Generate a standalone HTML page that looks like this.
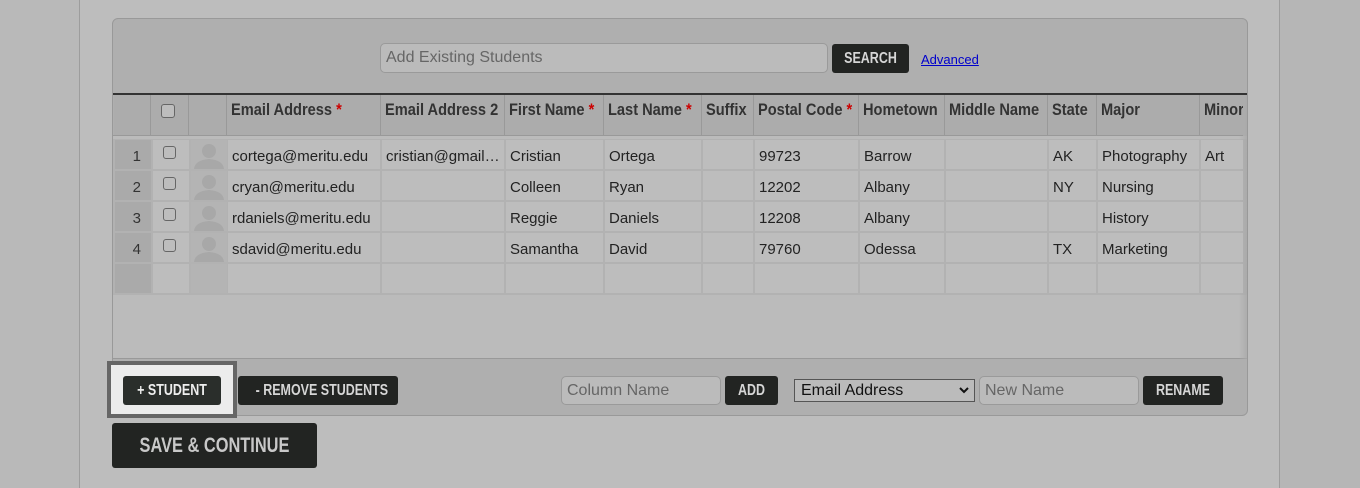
<!DOCTYPE html>
<html><head><meta charset="utf-8"><style>
*{box-sizing:border-box;margin:0;padding:0}
body{width:1360px;height:488px;background:#bdbdbd;position:relative;overflow:hidden;font-family:"Liberation Sans",sans-serif}
.abs{position:absolute}
.n{display:inline-block;transform:scaleX(.86);transform-origin:left center;font-weight:bold;white-space:nowrap}
.btn{position:absolute;background:#222422;color:#d6d6d6;border-radius:3px;font-size:16px;overflow:hidden;white-space:nowrap}
.btn .n{transform-origin:center;position:absolute;left:0;right:0;text-align:center;transform:scaleX(.78)}
.inp{position:absolute;background:#bbb;border:1px solid #9a9a9a;border-radius:5px;color:#666;font-size:16px;padding-left:5px}
.hc{position:absolute;top:95px;height:40px;border-right:1px solid #999;font-size:17px;color:#333;padding:5px 0 0 4px;white-space:nowrap;overflow:hidden;background:#acacac}
.hc b{color:#c00}
.c{position:absolute;height:29px;background:#bdbdbd;font-size:15px;color:#222;padding:8px 0 0 4px;white-space:nowrap;overflow:hidden}
.rn{background:#aaa;text-align:right;padding-right:10px;color:#333}
.cb{width:13px;height:13px;border:1px solid #666;border-radius:3px;background:#bdbdbd;position:absolute}
</style></head><body>
<div class="abs" style="left:0;top:0;width:80px;height:488px;background:#b9b9b9;border-right:1px solid #9d9d9d"></div>
<div class="abs" style="left:1279px;top:0;width:81px;height:488px;background:#b6b6b6;border-left:1px solid #9d9d9d"></div>
<div class="abs" style="left:112px;top:18px;width:1136px;height:398px;background:#afafaf;border:1px solid #999;border-radius:6px;overflow:hidden">
 <div class="abs" style="left:0;top:74px;width:1136px;height:2px;background:#333"></div>
 <div class="abs" style="left:0;top:117px;width:1136px;height:223px;background:#bbb"></div>
 <div class="abs" style="left:0;top:120px;width:1136px;height:156px;background:#b2b2b2"></div>
 <div class="abs" style="left:0;top:339px;width:1136px;height:1px;background:#999"></div>
 <div class="abs" style="left:1126px;top:76px;width:10px;height:264px;background:linear-gradient(90deg,rgba(187,187,187,0),#a9a9a9)"></div>
</div>
<div class="inp" style="left:380px;top:43px;width:448px;height:30px;line-height:28px">Add Existing Students</div>
<div class="btn" style="left:832px;top:44px;width:77px;height:29px;line-height:29px"><span class="n">SEARCH</span></div>
<div class="abs" style="left:921px;top:52px;font-size:13px;color:#0000cc;text-decoration:underline">Advanced</div>

<div class="hc" style="left:114px;width:37px"></div>
<div class="hc" style="left:151px;width:38px"><div class="cb" style="left:10px;top:9px;width:14px;height:14px"></div></div>
<div class="hc" style="left:189px;width:38px"></div>
<div class="hc" style="left:227px;width:154px"><span class="n">Email Address <b>*</b></span></div>
<div class="hc" style="left:381px;width:124px"><span class="n">Email Address 2</span></div>
<div class="hc" style="left:505px;width:99px"><span class="n">First Name <b>*</b></span></div>
<div class="hc" style="left:604px;width:98px"><span class="n">Last Name <b>*</b></span></div>
<div class="hc" style="left:702px;width:52px"><span class="n">Suffix</span></div>
<div class="hc" style="left:754px;width:105px"><span class="n">Postal Code <b>*</b></span></div>
<div class="hc" style="left:859px;width:86px"><span class="n">Hometown</span></div>
<div class="hc" style="left:945px;width:103px"><span class="n">Middle Name</span></div>
<div class="hc" style="left:1048px;width:49px"><span class="n">State</span></div>
<div class="hc" style="left:1097px;width:103px"><span class="n">Major</span></div>
<div class="hc" style="left:1200px;width:43px;border-right:0"><span class="n">Minor</span></div>
<div class="abs" style="left:113px;top:135px;width:1130px;height:1px;background:#999"></div>

<div id="rows"></div>
<script>
const cols=[[115,36],[153,36],[191,36],[228,152],[382,122],[506,97],[605,96],[703,50],[755,103],[860,84],[946,101],[1049,47],[1098,101],[1201,42]];
const data=[["1","","","cortega@meritu.edu","cristian@gmail…","Cristian","Ortega","","99723","Barrow","","AK","Photography","Art"],
["2","","","cryan@meritu.edu","","Colleen","Ryan","","12202","Albany","","NY","Nursing",""],
["3","","","rdaniels@meritu.edu","","Reggie","Daniels","","12208","Albany","","","History",""],
["4","","","sdavid@meritu.edu","","Samantha","David","","79760","Odessa","","TX","Marketing",""],
["","","","","","","","","","","","","",""]];
let h="";
data.forEach((r,i)=>{const y=140+i*31;
cols.forEach((c,j)=>{let cls="c"+(j==0?" rn":"");let inner=r[j];
if(j==1&&r[0])inner='<div class="cb" style="left:10px;top:6px"></div>';
if(j==2&&r[0])inner='<svg style="position:absolute;left:1px;top:0" width="34" height="29"><circle cx="17" cy="11" r="7" fill="#a8a8a8"/><path d="M2 29 Q3 20 17 19 Q31 20 32 29Z" fill="#a8a8a8"/></svg>';
const bg=(j==2)?"background:#b4b4b4;":"";
h+=`<div class="${cls}" style="${bg}left:${c[0]}px;top:${y}px;width:${c[1]}px">${inner}</div>`;});});
document.getElementById("rows").innerHTML=h;
</script>

<div class="abs" style="left:107px;top:361px;width:130px;height:57px;background:#ececec;border:4px solid #666"></div>
<div class="btn" style="left:123px;top:376px;width:98px;height:29px;line-height:29px;background:#2a2e2b;color:#eee"><span class="n">+ STUDENT</span></div>
<div class="btn" style="left:238px;top:376px;width:160px;height:29px;line-height:29px"><span class="n">- REMOVE STUDENTS</span></div>
<div class="inp" style="left:561px;top:376px;width:160px;height:29px;line-height:27px">Column Name</div>
<div class="btn" style="left:725px;top:376px;width:53px;height:29px;line-height:29px"><span class="n">ADD</span></div>
<div class="abs" style="left:794px;top:379px;width:181px;height:23px;border:1px solid #555;background:#bbb;font-size:16px;color:#111;padding:2px 0 0 6px">Email Address<svg style="position:absolute;right:5px;top:7px" width="10" height="7"><path d="M1 1 L5 5 L9 1" stroke="#111" stroke-width="2" fill="none"/></svg></div>
<div class="inp" style="left:979px;top:376px;width:160px;height:29px;line-height:27px">New Name</div>
<div class="btn" style="left:1143px;top:376px;width:80px;height:29px;line-height:29px"><span class="n">RENAME</span></div>
<div class="btn" style="left:112px;top:423px;width:205px;height:45px;line-height:45px;font-size:21px;color:#c8c8c8"><span class="n">SAVE &amp; CONTINUE</span></div>
</body></html>
